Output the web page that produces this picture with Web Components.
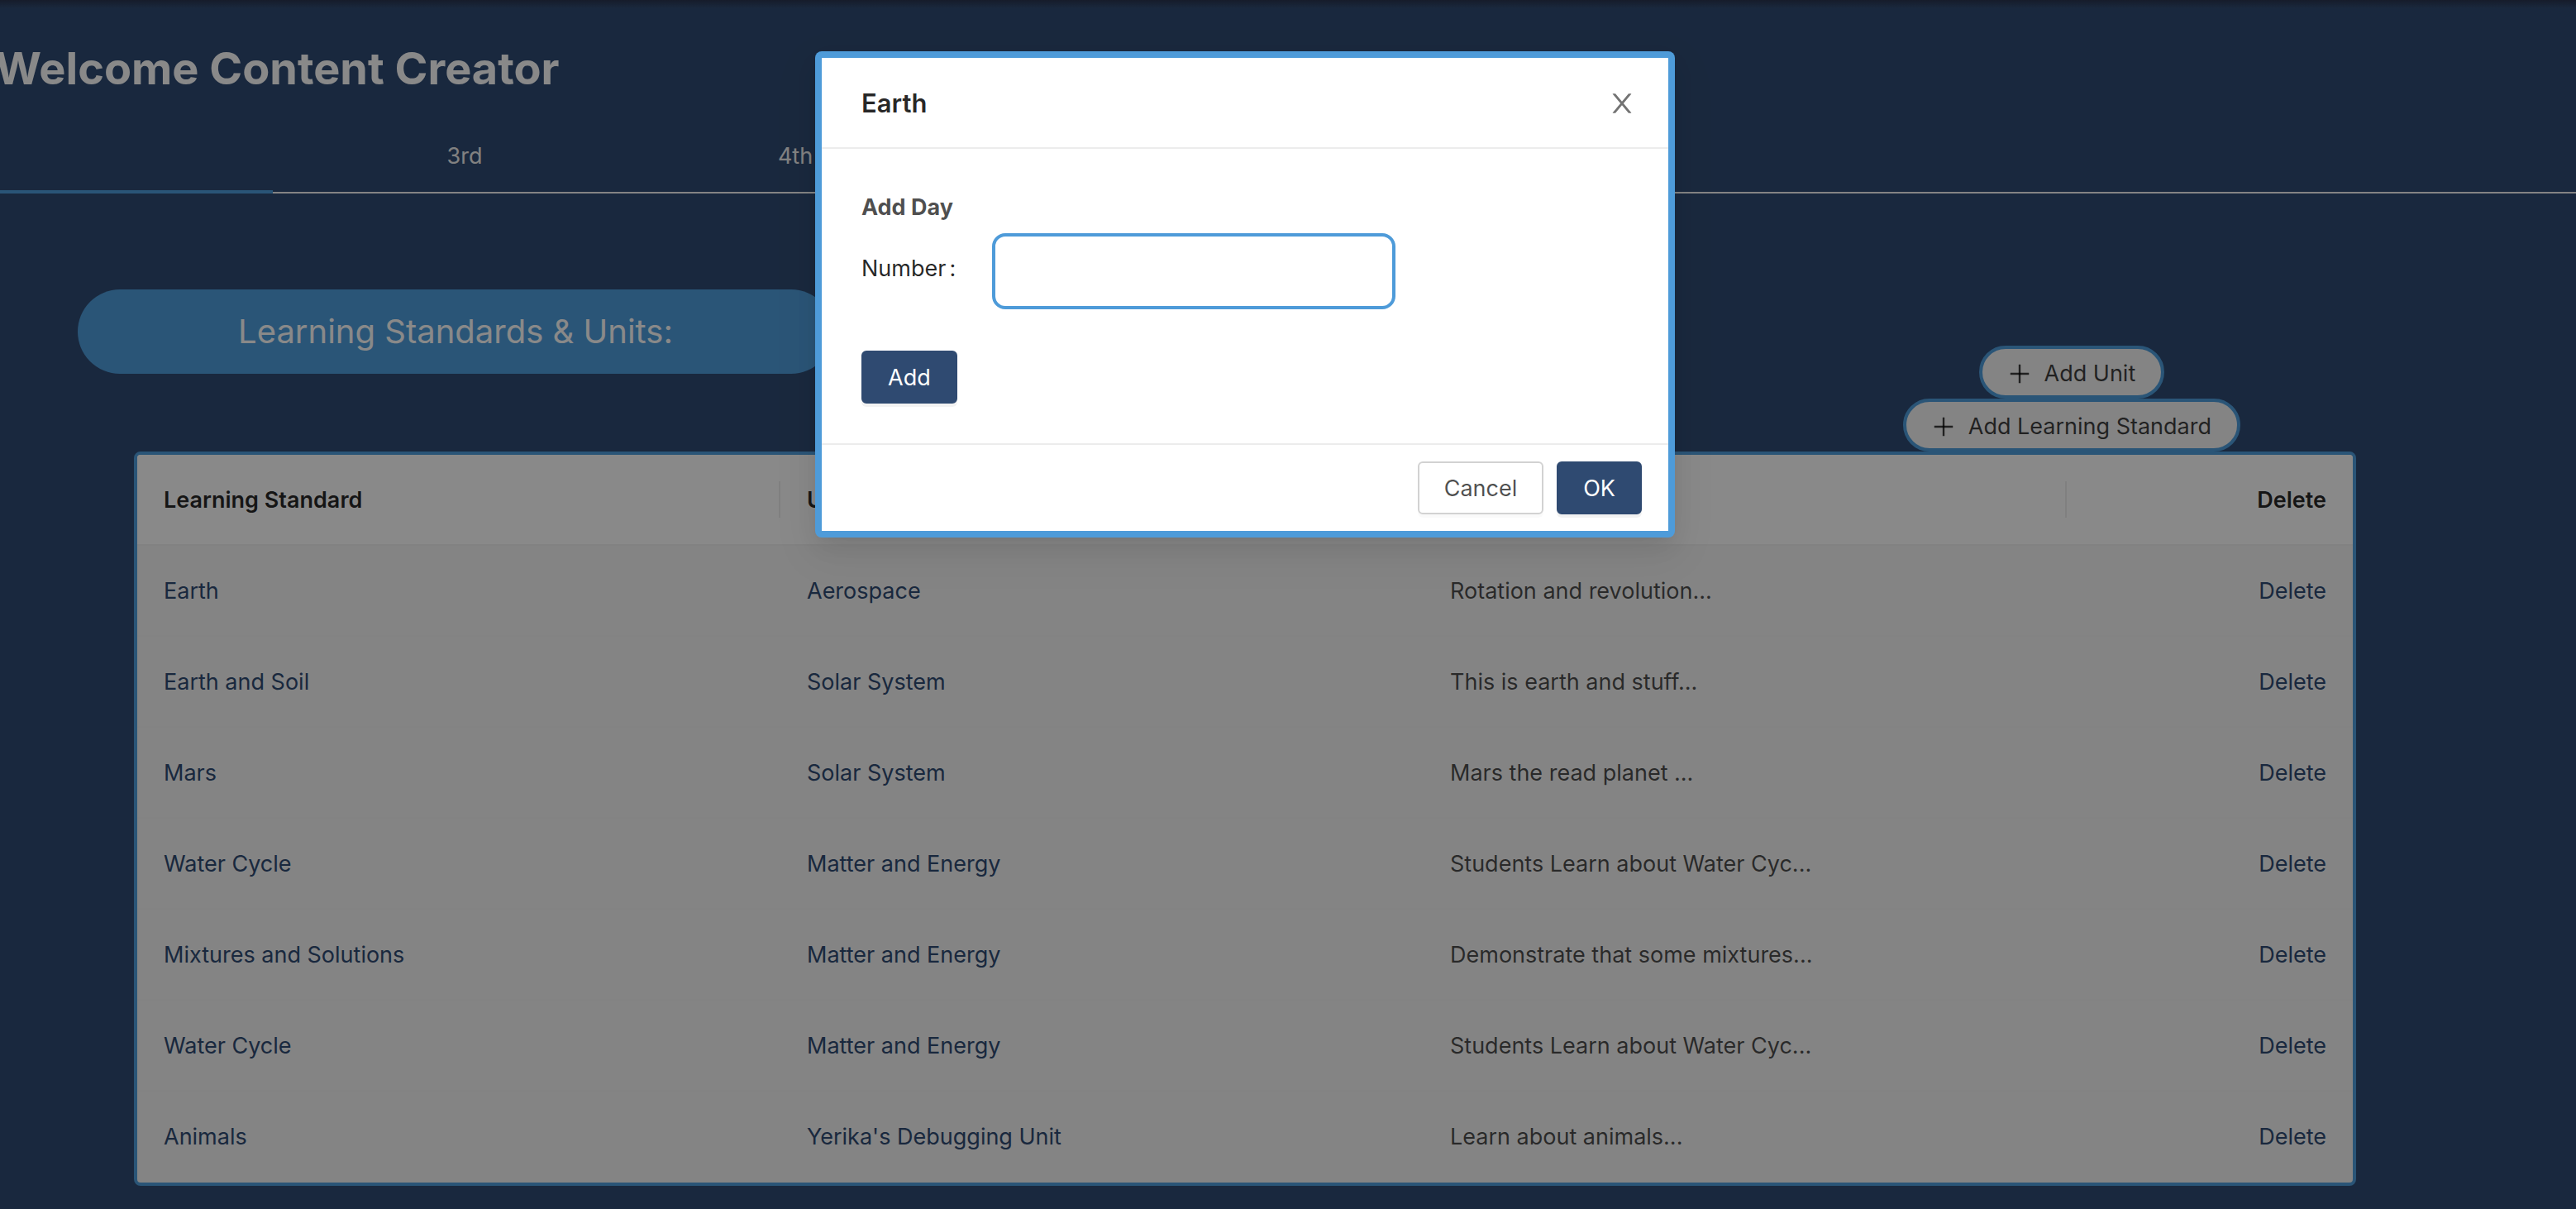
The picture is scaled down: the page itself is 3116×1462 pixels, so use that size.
<!DOCTYPE html>
<html lang="en">
<head>
<meta charset="utf-8">
<title>Content Creator</title>
<style>
  :root {
    --navy: #2f4a71;
    --blue: #4e9bd9;
    --text: rgba(0, 0, 0, .85);
    --soft: rgba(0, 0, 0, .7);
    --size: 27px;
    --line: 44px;
  }
  html, body { margin: 0; height: 100%; overflow: hidden; }
  body {
    background: var(--navy);
    color: var(--text);
    font: 400 var(--size)/var(--line) Inter, "Liberation Sans", sans-serif;
  }
</style>
</head>
<body>
<creator-app></creator-app>

<script>
const define = (name, html, setup) => {
  const template = document.createElement('template');
  template.innerHTML = `<style>*{box-sizing:border-box}</style>${html}`;
  customElements.define(name, class extends HTMLElement {
    constructor() {
      super();
      this.attachShadow({ mode: 'open' }).append(template.content.cloneNode(true));
    }
    connectedCallback() { if (setup) setup(this, this.shadowRoot); }
  });
};

define('ui-icon', `
  <style>
    :host { display: inline-flex; flex: none; width: 28px; height: 28px; }
    svg { width: 100%; height: 100%; fill: currentColor; }
  </style>
  <svg viewBox="64 64 896 896" aria-hidden="true"></svg>`, (host, root) => {
  const shapes = {
    plus: '<path d="M482 152h60q8 0 8 8v704q0 8-8 8h-60q-8 0-8-8V160q0-8 8-8z"/><path d="M160 474h704q8 0 8 8v60q0 8-8 8H160q-8 0-8-8v-60q0-8 8-8z"/>',
    close: '<path d="M563.8 512l262.5-312.9c4.4-5.2.7-13.1-6.1-13.1h-79.8c-4.7 0-9.2 2.1-12.3 5.7L511.6 449.8 295.1 191.7c-3-3.6-7.5-5.7-12.3-5.7H203c-6.8 0-10.5 7.9-6.1 13.1L459.4 512 196.9 824.9A7.95 7.95 0 00203 838h79.8c4.7 0 9.2-2.1 12.3-5.7l216.5-258.1 216.5 258.1c3 3.6 7.5 5.7 12.3 5.7h79.8c6.8 0 10.5-7.9 6.1-13.1L563.8 512z"/>'
  };
  root.querySelector('svg').innerHTML = shapes[host.getAttribute('name')];
});

define('ui-button', `
  <style>
    :host { display: inline-flex; }
    button {
      display: flex; align-items: center; gap: 16px;
      height: 64px; padding: 2px 30px 0; margin: 0;
      font: inherit; color: var(--soft); background: #fff;
      border: 2px solid #d2d2d2; border-radius: 6px;
      box-shadow: 0 4px 0 rgba(0, 0, 0, .02); cursor: pointer; white-space: nowrap;
    }
    :host([kind=primary]) button {
      color: #fff; background: var(--navy); border-color: var(--navy);
      box-shadow: 0 4px 0 rgba(0, 0, 0, .05);
    }
    :host([kind=round]) button {
      padding: 3px 31px 0; color: rgba(0, 0, 0, .75);
      background: #f0f0f0; border: 4px solid var(--blue); border-radius: 32px;
      box-shadow: none;
    }
  </style>
  <button type="button"><slot></slot></button>`);

define('grade-tabs', `
  <style>
    :host { display: block; border-bottom: 2px solid #f0f0f0; }
    div { display: flex; gap: 64px; height: 92px; margin-bottom: -2px; }
    button {
      width: 336px; padding: 25px 0 0; margin: 0; background: none; border: 0;
      display: flex; justify-content: center; align-items: flex-start;
      font: inherit; color: #ececec;
    }
    button[aria-selected=true] { box-shadow: inset 0 -4px var(--blue); position: relative; }
  </style>
  <div role="tablist">
    <button role="tab" aria-selected="true"></button>
    <button role="tab" aria-selected="false">3rd</button>
    <button role="tab" aria-selected="false">4th</button>
  </div>`);

define('standards-table', `
  <style>
    :host { display: block; border: 4px solid var(--blue); border-radius: 8px; background: #f0f0f0; overflow: hidden; }
    table { width: 100%; table-layout: fixed; border-collapse: separate; border-spacing: 0; }
    .last { width: 346px; }
    th, td { height: 110px; padding: 2px 32px 0; text-align: left; border-bottom: 2px solid #eee; }
    th { background: #fafafa; font-weight: 600; position: relative; border-color: #ededed; }
    tr:last-child td { border-color: transparent; }
    th:not(:last-child)::after {
      content: ""; position: absolute; right: 0; top: 32px; width: 2px; height: 44px; background: #e9e9e9;
    }
    th:last-child, td:last-child { text-align: right; }
    td { color: var(--soft); }
    a { color: var(--navy); text-decoration: none; }
  </style>
  <table>
    <colgroup><col><col><col><col class="last"></colgroup>
    <thead><tr><th>Learning Standard</th><th>Unit</th><th></th><th>Delete</th></tr></thead>
    <tbody></tbody>
  </table>`, (host, root) => {
  const rows = [
    ['Earth', 'Aerospace', 'Rotation and revolution...'],
    ['Earth and Soil', 'Solar System', 'This is earth and stuff...'],
    ['Mars', 'Solar System', 'Mars the read planet ...'],
    ['Water Cycle', 'Matter and Energy', 'Students Learn about Water Cyc...'],
    ['Mixtures and Solutions', 'Matter and Energy', 'Demonstrate that some mixtures...'],
    ['Water Cycle', 'Matter and Energy', 'Students Learn about Water Cyc...'],
    ['Animals', "Yerika's Debugging Unit", 'Learn about animals...']
  ];
  root.querySelector('tbody').innerHTML = rows.map(([name, unit, text]) =>
    `<tr><td><a href="#">${name}</a></td><td><a href="#">${unit}</a></td><td>${text}</td><td><a href="#">Delete</a></td></tr>`).join('');
});

define('day-dialog', `
  <style>
    :host {
      position: fixed; inset: 0; display: flex; justify-content: center; align-items: flex-start;
      padding: 62px 104px 0 0;
      background:
        linear-gradient(rgba(20, 20, 30, .6), transparent) top / 100% 10px no-repeat,
        rgba(0, 0, 0, .45);
    }
    section {
      width: 1040px; background: var(--blue); border-radius: 8px; padding: 8px;
      box-shadow: 0 6px 12px -8px rgba(0,0,0,.12), 0 12px 32px rgba(0,0,0,.08), 0 18px 56px 16px rgba(0,0,0,.05);
    }
    header, .body, footer { background: #fff; }
    header {
      display: flex; justify-content: space-between; align-items: center;
      padding: 33px 40px 31px 48px; border-bottom: 2px solid #ececec;
    }
    h2 { margin: 0; font-size: 31px; line-height: 44px; font-weight: 600; }
    .close { display: flex; padding: 0; border: 0; background: none; color: rgba(0,0,0,.55); }
    .close ui-icon { width: 32px; height: 32px; }
    .body { padding: 49px 48px 48px; }
    h3 { margin: 0 0 9px; font-size: inherit; line-height: inherit; font-weight: 700; color: var(--soft); }
    .field { display: flex; margin-bottom: 50px; }
    label { width: 158px; padding-top: 21px; display: flex; gap: 4px; }
    input {
      width: 488px; height: 92px; padding: 0 22px; font: inherit; color: inherit;
      border: 4px solid var(--blue); border-radius: 16px; background: #fff; outline: 0;
    }
    .body ui-button { display: flex; }
    footer { display: flex; justify-content: flex-end; gap: 16px; padding: 20px 32px; border-top: 2px solid #ececec; }
  </style>
  <section role="dialog" aria-modal="true" aria-labelledby="title">
    <header>
      <h2 id="title"><slot></slot></h2>
      <button class="close" type="button" aria-label="Close"><ui-icon name="close"></ui-icon></button>
    </header>
    <div class="body">
      <h3>Add Day</h3>
      <div class="field">
        <label for="number"><span>Number</span><span>:</span></label>
        <input id="number" type="text">
      </div>
      <ui-button kind="primary">Add</ui-button>
    </div>
    <footer>
      <ui-button>Cancel</ui-button>
      <ui-button kind="primary">OK</ui-button>
    </footer>
  </section>`);

define('creator-app', `
  <style>
    :host { display: block; margin-left: -6px; padding-top: 51px; }
    h1 { margin: 0 0 27px; font-size: 54px; line-height: 64px; font-weight: 650; color: #fafafa; }
    .top { display: flex; justify-content: space-between; margin: 116px 406px 0 100px; }
    h2 {
      margin: 0; width: 914px; height: 102px; border-radius: 51px; background: var(--blue);
      display: flex; align-items: center; justify-content: center;
      font-size: 40px; font-weight: 400; color: #fafafa;
    }
    .actions { display: flex; flex-direction: column; align-items: center; padding-top: 68px; }
    standards-table { margin: 0 266px 0 168px; }
  </style>
  <h1>Welcome Content Creator</h1>
  <grade-tabs></grade-tabs>
  <div class="top">
    <h2>Learning Standards &amp; Units:</h2>
    <div class="actions">
      <ui-button kind="round"><ui-icon name="plus"></ui-icon>Add Unit</ui-button>
      <ui-button kind="round"><ui-icon name="plus"></ui-icon>Add Learning Standard</ui-button>
    </div>
  </div>
  <standards-table></standards-table>
  <day-dialog>Earth</day-dialog>`);
</script>
</body>
</html>
